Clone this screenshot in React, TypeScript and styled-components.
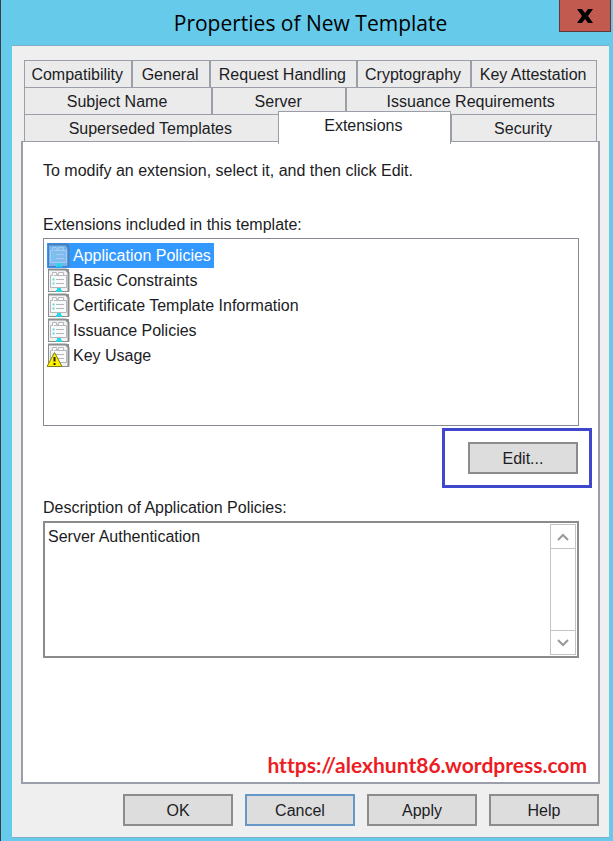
import React, { useState } from "react";
import styled, { createGlobalStyle, css } from "styled-components";

const line = "#9a9ea8";

const GlobalStyle = createGlobalStyle`
  *, *::before, *::after { box-sizing: border-box; }
  body { margin: 0; }
  button, textarea { font: inherit; color: inherit; }
`;

const DialogWindow = styled.div`
  min-height: 100vh;
  display: flex;
  flex-direction: column;
  padding: 0 4px 3px 11px;
  border-left: 1px solid #3a3f45;
  background: #66caeb;
  color: #1c1c24;
  font: 16px/20px "Liberation Sans", Arial, sans-serif;
`;

const TitleBar = styled.header`
  position: relative;
  height: 45px;
  display: flex;
  align-items: center;
  justify-content: center;
`;

const Title = styled.h1`
  margin: 0;
  color: #000;
  font: 400 21px/44px "Open Sans", "Noto Sans", sans-serif;
`;

const CloseButton = styled.button`
  position: absolute;
  top: 0;
  right: -2px;
  width: 52px;
  height: 32px;
  padding: 0;
  display: flex;
  align-items: center;
  justify-content: center;
  border: 1px solid #5e393b;
  border-top: 0;
  background: #c35a50;
`;

const Body = styled.main`
  flex: 1;
  display: flex;
  flex-direction: column;
  padding: 14px 9px 11px;
  border-top: 1px solid #7fafc6;
  border-bottom: 1px solid #7fafc6;
  background: #efefef;
`;

const Tabs = styled.div`
  margin: 0 3px;
  border: 1px solid ${line};
  border-width: 1px 1px 0 0;
`;

const TabRow = styled.div`
  display: flex;
  height: 27px;
`;

const Tab = styled.button<{ $grow: number; $active: boolean }>`
  flex: ${(p) => p.$grow} 1 0;
  min-width: 0;
  padding: 2px 2px 0 0;
  border: 0 solid ${line};
  border-width: 0 0 1px 2px;
  background: #ebebeb;
  white-space: nowrap;
  &:first-child { border-left-width: 1px; }
  ${(p) =>
    p.$active &&
    css`
      position: relative;
      height: 33px;
      margin: -4px -1px -2px 0;
      padding: 0 2px 4px 0;
      border-width: 1px 1px 0;
      background: #fff;
    `}
`;

const Panel = styled.section`
  flex: 1;
  display: flex;
  flex-direction: column;
  padding: 19px 19px 4px 20px;
  border: 1px solid ${line};
  border-width: 0 2px 2px;
  background: #fff;
  box-shadow: 0 -1px 0 ${line};
`;

const Text = styled.p`
  margin: 0 0 34px;
`;

const Caption = styled.label`
  display: block;
  margin-bottom: 3px;
`;

const ExtensionList = styled.ul`
  height: 188px;
  margin: 0;
  padding: 4px 3px;
  border: 1px solid #858991;
  list-style: none;
`;

const Extension = styled.li<{ $selected: boolean }>`
  width: max-content;
  height: 25px;
  display: flex;
  align-items: center;
  gap: 3px;
  padding-right: 3px;
  line-height: 25px;
  cursor: default;
  ${(p) => p.$selected && css`background: #3399ff; color: #fff;`}
`;

const Highlight = styled.div`
  align-self: flex-end;
  margin: 2px -13px 10px 0;
  padding: 11px 11px 11px 23px;
  border: 3px solid #3f48cc;
`;

const PushButton = styled.button<{ $focused?: boolean }>`
  width: 110px;
  height: 32px;
  padding: 2px 0 0;
  border: 2px solid ${(p) => (p.$focused ? "#6797c6" : "#8c8c8c")};
  background: #dddddd;
`;

const DescriptionBox = styled.div`
  height: 137px;
  display: flex;
  border: 2px solid #8b8b8b;
`;

const Description = styled.textarea`
  flex: 1;
  min-width: 0;
  padding: 4px 3px;
  border: 0;
  outline: 0;
  resize: none;
  overflow: hidden;
  background: transparent;
`;

const ScrollTrack = styled.div`
  width: 26px;
  margin: 1px;
  display: flex;
  flex-direction: column;
  justify-content: space-between;
  border: 1px solid #c3c3c3;
`;

const ScrollButton = styled.button<{ $end?: boolean }>`
  height: 24px;
  padding: 0;
  display: flex;
  align-items: center;
  justify-content: center;
  border: 0 solid #c3c3c3;
  border-width: ${(p) => (p.$end ? "1px 0 0" : "0 0 1px")};
  background: #fff;
`;

const SiteLink = styled.a`
  align-self: flex-end;
  margin: auto -8px 0 0;
  color: #ed1c24;
  font: 700 21px/26px Lato, sans-serif;
  font-variant-ligatures: none;
  text-decoration: none;
`;

const Footer = styled.footer`
  display: flex;
  justify-content: flex-end;
  gap: 12px;
  margin: 10px 1px 0 0;
`;

function PolicyIcon({ selected, warning }: { selected: boolean; warning: boolean }) {
  const edge = selected ? "#4b7eb8" : "#8b8e91";
  const paper = selected ? "#74b4ef" : "#f1f1f1";
  const detail = selected ? "#a5cdf2" : "#b5b7ba";
  return (
    <svg width="23" height="25" viewBox="0 0 23 25" aria-hidden="true">
      <rect x="1.500" y="1.500" width="20" height="22" fill={paper} stroke={edge} />
      <path d="M1 1.500h18l2.500 3v19" stroke={edge} strokeWidth="2" fill="none" />
      <path d="M3.500 19.500V7.500h2v-3h4v2h2v-2h5v3h3v12z" fill={selected ? "#82bbef" : "#fafafa"} stroke={detail} />
      <path d="M9 11.500h8M9 15.500h8M7 7.500h10" stroke={detail} />
      <path d="M5.500 11.500h2M5.500 15.500h2" stroke="#5adbe0" strokeWidth="2" />
      <path d="M10 20h4v2h1v2h-2l-1-1-1 1H9v-2h1z" fill="#20dce9" />
      {warning && (
        <>
          <path d="M7.500 9.500 15 23.500H0z" fill="#fff200" stroke="#827d18" strokeLinejoin="round" />
          <path d="M7.500 14v4.500M7.500 20v2" stroke="#29270b" strokeWidth="2" />
        </>
      )}
    </svg>
  );
}

function Chevron({ down }: { down?: boolean }) {
  return (
    <svg width="12" height="8" viewBox="0 0 12 8" aria-hidden="true">
      <path d={down ? "M1 1l5 5 5-5" : "M1 7l5-5 5 5"} fill="none" stroke="#999" strokeWidth="2" />
    </svg>
  );
}

const tabRows: [string, number][][] = [
  [["Compatibility", 108], ["General", 76], ["Request Handling", 148], ["Cryptography", 114], ["Key Attestation", 126]],
  [["Subject Name", 188], ["Server", 133], ["Issuance Requirements", 252]],
  [["Superseded Templates", 256], ["Extensions", 173], ["Security", 145]],
];

const extensions = [
  "Application Policies",
  "Basic Constraints",
  "Certificate Template Information",
  "Issuance Policies",
  "Key Usage",
];

export default function App() {
  const [tab, setTab] = useState("Extensions");
  const [selected, setSelected] = useState(extensions[0]);
  return (
    <DialogWindow role="dialog" aria-labelledby="title">
      <GlobalStyle />
      <TitleBar>
        <Title id="title">Properties of New Template</Title>
        <CloseButton aria-label="Close">
          <svg width="16" height="14" viewBox="0 0 16 14" aria-hidden="true">
            <path d="M0 0h5l3 4 3-4h5l-5 7 5 7h-5l-3-4-3 4H0l5-7z" fill="#000" />
          </svg>
        </CloseButton>
      </TitleBar>
      <Body>
        <Tabs role="tablist">
          {tabRows.map((row) => (
            <TabRow key={row[0][0]} role="presentation">
              {row.map(([name, grow]) => (
                <Tab key={name} role="tab" aria-selected={tab === name} $grow={grow} $active={tab === name} onClick={() => setTab(name)}>
                  {name}
                </Tab>
              ))}
            </TabRow>
          ))}
        </Tabs>
        <Panel role="tabpanel">
          <Text>To modify an extension, select it, and then click Edit.</Text>
          <Caption id="extensions-label">Extensions included in this template:</Caption>
          <ExtensionList role="listbox" aria-labelledby="extensions-label">
            {extensions.map((name) => (
              <Extension key={name} role="option" tabIndex={0} aria-selected={selected === name} $selected={selected === name} onClick={() => setSelected(name)}>
                <PolicyIcon selected={selected === name} warning={name === "Key Usage"} />
                {name}
              </Extension>
            ))}
          </ExtensionList>
          <Highlight>
            <PushButton>Edit...</PushButton>
          </Highlight>
          <Caption htmlFor="description">Description of Application Policies:</Caption>
          <DescriptionBox>
            <Description id="description" readOnly defaultValue="Server Authentication" />
            <ScrollTrack>
              <ScrollButton aria-label="Scroll up"><Chevron /></ScrollButton>
              <ScrollButton aria-label="Scroll down" $end><Chevron down /></ScrollButton>
            </ScrollTrack>
          </DescriptionBox>
          <SiteLink href="https://alexhunt86.wordpress.com">https://alexhunt86.wordpress.com</SiteLink>
        </Panel>
        <Footer>
          <PushButton>OK</PushButton>
          <PushButton $focused>Cancel</PushButton>
          <PushButton>Apply</PushButton>
          <PushButton>Help</PushButton>
        </Footer>
      </Body>
    </DialogWindow>
  );
}
